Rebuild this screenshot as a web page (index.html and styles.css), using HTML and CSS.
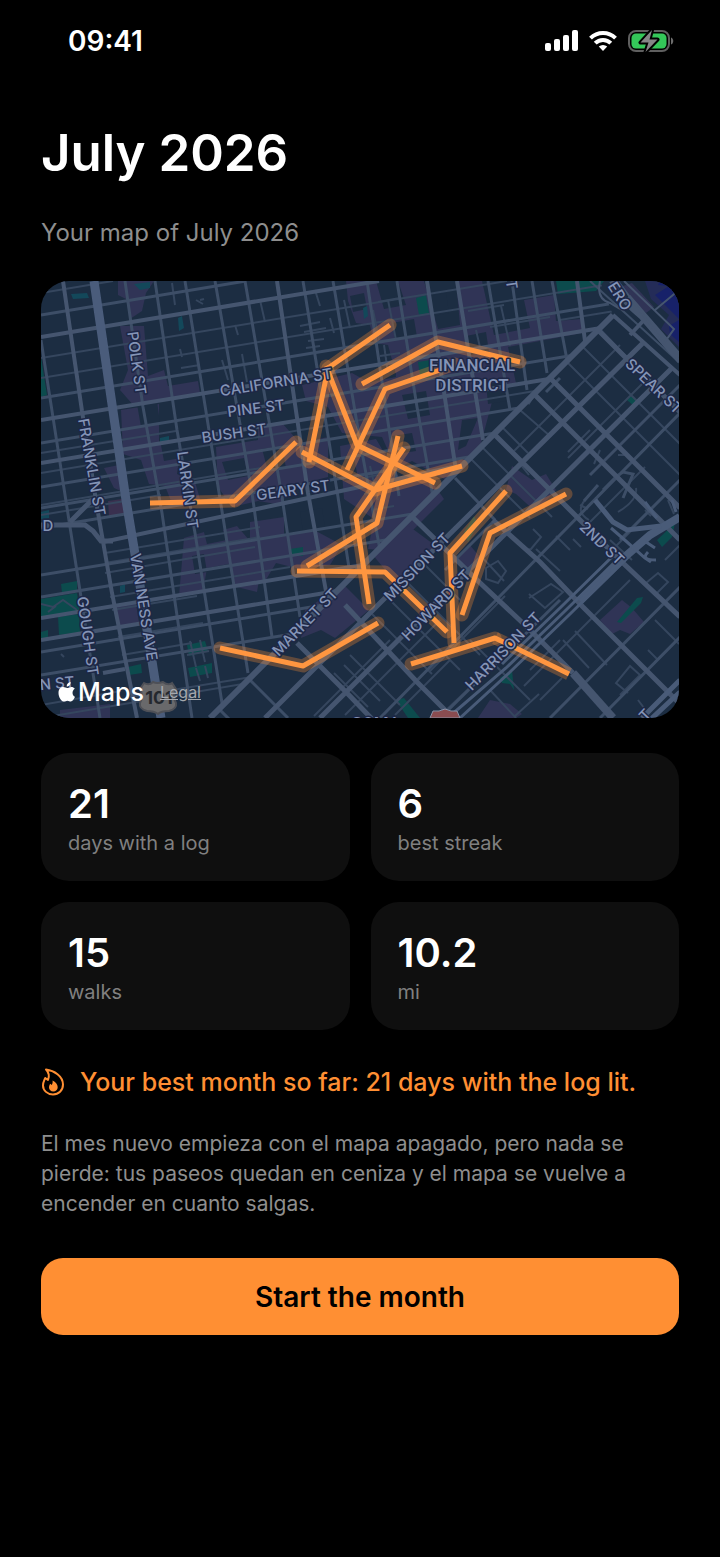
FILE: index.html
```html
<!DOCTYPE html>
<html lang="en">
<head>
    <meta charset="UTF-8">
    <meta name="viewport" content="width=device-width, initial-scale=1.0">
    <title>July 2026</title>
    <link rel="stylesheet" href="styles.css">
</head>
<body>
    <header class="status-bar">
        <span class="time">09:41</span>
        <div class="status-icons">
            <svg width="33" height="22" viewBox="0 0 33 22" fill="#fff" aria-hidden="true">
                <rect x="0" y="13" width="6" height="8" rx="2"/>
                <rect x="9" y="9" width="6" height="12" rx="2"/>
                <rect x="18" y="5" width="6" height="16" rx="2"/>
                <rect x="27" y="0" width="6" height="21" rx="2"/>
            </svg>
            <svg width="28" height="22" viewBox="0 0 28 22" fill="none" stroke="#fff" stroke-width="4" aria-hidden="true">
                <path d="M1.5 8.2a17.800 17.800 0 0 1 25 0"/>
                <path d="M6.200 13.200a11 11 0 0 1 15.600 0"/>
                <path d="M14 21l-4.200-4.400a6 6 0 0 1 8.400 0z" fill="#fff" stroke="none"/>
            </svg>
            <svg width="46" height="24" viewBox="0 0 46 24" aria-hidden="true">
                <rect x="1" y="2" width="40" height="20" rx="7" fill="none" stroke="#5f5f5f" stroke-width="2"/>
                <rect x="3.500" y="4.500" width="35" height="15" rx="4.500" fill="#34c759"/>
                <path d="M43 8.500c3 1 3 6 0 7z" fill="#6d6d6d"/>
                <path d="M24 1L12.500 13.500h8L17.500 23 29.500 10.500h-8z" fill="#858587" stroke="#000" stroke-width="4" stroke-linejoin="round" paint-order="stroke"/>
            </svg>
        </div>
    </header>

    <main class="recap">
        <h1 class="title">July 2026</h1>
        <p class="subtitle">Your map of July 2026</p>

        <div class="map">
            <svg class="map-canvas" viewBox="41 281 638 437" role="img" aria-label="Map of walks">
                <defs>
                    <clipPath id="north"><path d="M41 281H600L613 315 210 718H41z"/></clipPath>
                    <clipPath id="soma"><path d="M613 315L680 373V718H210z"/></clipPath>
                </defs>
                <rect x="41" y="281" width="638" height="437" fill="#1c2d42"/>

                <!-- shopping areas -->
                <g fill="#303456">
                    <path d="M118 281h36l-8 12-4 18-12 8-4-20-8-4zM120 326h24l4 50 16-6 4 16 30-5 2 12-66 13-14-16 8-20z"/>
                    <path d="M121 410l38-6v38l22 4-4 28 18 8 6 20-28 4-8-20-16-2-8-24-18-6zM104 468l20-4 4 30-14-6z"/>
                    <path d="M216 447l42-7v-12l24-5 18 20 28-6v40l-40 10-6 18-24-4-26 6-14-20z"/>
                    <path d="M184 538l20-6 3 12 20-4-4-10 14-4 26 30-6 36-24-6-4-22-22 4-4 24-24 4z"/>
                    <path d="M250 522l34-5v18l32-4 26 14-12 20-30 4-24-6-12 20-14-4z"/>
                    <path d="M346 281h30l8 28 22-4-8-24h26l14 48 22-4-4-44h26l12 54 36-7-6-28 30-5 2 26 26-2v14l-74 14 8 36-20 4-16 60-32 34-36-20-16 8-14-32-40-4-14-26-22-6-4-16 50-12 18 10 26-8-8-30-14-2-4-18-14-2-8-22z"/>
                    <path d="M340 446l36-7 24 40 30 0 14 20-52 52-24-2 6-30-30-20z"/>
                    <path d="M372 554l34-30 30 22-24 30-20 2z"/>
                    <path d="M305 610l38-26 26 26-34 28-14-8-20 8z"/>
                    <path d="M512 466l20 14 14-6 10 16-20 22-20-18-10-4z"/>
                    <path d="M455 560l14-16 10 12-12 18zM600 620l22-20 10 8 12 14-14 12-10-4-8 4zM490 700l20 4 12 10-6 4h-38z"/>
                    <path d="M117 607l19-3 3 18-20 4zM60 710l50-6v14H60zM632 283l22 24-8 6-26-26z"/>
                </g>
                <path d="M108 501l14-2 3 15-16 3z" fill="#39304f"/>

                <!-- keeps the blocks from reading as one solid patch -->
                <g fill="#1c2d42">
                    <path d="M137 404l20-3 3 22-19 4zM160 440l16-2 5 20-17 3zM222 462l22-4 4 18-20 4zM262 449l20-3 4 22-18 3zM300 512l22-4 3 20-22 3zM392 323l22-4 3 18-22 3zM402 395l24-4 4 24-22 4zM392 436l20-3 4 18-20 3zM462 420l16-2-12 28-8 4zM466 336l20-4 3 20-18 3zM486 384l16-3 4 20-18 3z"/>
                    <path d="M372 362l20-3 4 18-20 4zM340 460l14-2 4 20-14 3zM430 296l16-3 3 20-15 3zM350 296l14-3 3 16-14 3zM192 556l12-2 3 18-12 2z"/>
                </g>

                <!-- parks and water -->
                <g fill="#0c4b4d">
                    <path d="M41 357l6 38-6 2zM41 599l36-6 3 20-39 5zM61 584l16-3v10l-15 2zM58 617l21-3 1 18-21 3zM41 632l7-2v8h-7zM128 667l13-3 1 9-13 2z"/>
                    <path d="M187 645l18-4 3 10-19 5zM188 668l24-5v10l-22 4zM556 281h48l-8 10-38 3zM627 400l4-4 8 7-4 4zM418 362l12-2v20l-10-4zM396 700l8-2 16 20h-12zM416 298l10-3 3 18-10 2z"/>
                    <path d="M657 540l18-17-3 14-10 10zM617 622l20-24 6-1-2 6-20 20zM500 678l12-8 2 20-4-6-8-1zM464 532l10-16 4 8-10 18zM290 549l13-2v9l-12-1z"/>
                    <path d="M71 294l16-1 2 5-16 1zM178 318l4-2 2 12-5 3zM160 438l9-2v7l-9-1zM363 308l4-2 1 10-4 3zM41 512l8-2v8l-8 1zM120 586l5-2v8l-5 1zM134 284l16-2v6l-10 2z" fill="#13485a"/>
                </g>
                <path d="M645 281h34v66l-18-18 8-14-18-16z" fill="#242c58"/>
                <path d="M660 281h19v38l-24-24 14-9-11-1zM669 326l10-6v22l-9-8z" fill="#172169"/>

                <!-- grid north of Market -->
                <g clip-path="url(#north)" fill="none">
                    <g stroke="#35465e" stroke-width="2">
                        <path d="M41 293l72-12M41 358l466-77M41 378l587-97M41 453l135-22M41 473l500-83M41 505l220-37M41 515l120-20M105 553l155-26M105 563l155-26M105 573l150-26M110 597l180-30M112 610l85-14M118 637l85-14M122 655l70-12M41 705l80-14M130 697l128-21M41 718l220-37"/>
                        <path d="M172 283l3 22M196 300l7 4M204 299l-4 1M235 325l3 10M180 349l2 8M181 368l19-3M222 360l6 20M242 354l5 28M260 300l5 22M315 290l5 16M330 318l4 15M300 326l20-4M304 332l22-4M308 341l16-2M306 348l14-2M344 300l6 28M378 302l22-4M373 310l6 30M388 300l8 40M380 356l20-3M384 345l4 28M476 330l6 26M468 311l36-6M490 327l60-10M501 306l9 40M560 320l60-10M370 466l8 34M362 478l16-3M364 494l14-3M372 510l22-4M108 641l22-4"/>
                        <path d="M190 641l6 26M200 640l5 22M187 655l22-4M196 668l4 13M205 666l3 12M41 604l12 3 10-7 14 10M48 612l8-6M61 654l3 3"/>
                    </g>
                    <g stroke="#3d4e67" stroke-width="3">
                        <path d="M41 315l205-34M41 398l586-97M41 443l540-89M41 487l490-81M41 508l460-76M41 528l440-73M41 575l420-69M41 597l380-63M41 652l300-50M41 675l270-44"/>
                        <path d="M125 281l18 126 19 106 30 205M155 281l22 149 18 103 27 170M185 281l32 199 31 193M215 281l37 212 20 144M245 281l37 216 18 120M303 281l35 216 14 90M333 281l27 160 22 120M367 281l32 215M397 281l20 126 16 90M488 281l22 129M512 281l15 109M532 281l15 92M552 281l15 79M41 340l29 187 30 191"/>
                    </g>
                    <g stroke="#45556f" stroke-width="4">
                        <path d="M41 337l338-56M41 420l560-92M41 463l520-86M103 542l350-75M41 618l340-56M41 640l320-53M103 673l22-4"/>
                        <path d="M63 281l19 130M82 411l15 96 15 86 25 125M277 281l31 212 22 120M427 281l30 196M457 281l26 159M577 281l8 60"/>
                    </g>
                    <path d="M41 525h44l8 6 8 10 12 0M70 522l22-22" stroke="#45556f" stroke-width="5"/>
                    <path d="M94 281l32 219 10 60 25 158" stroke="#4a5c7b" stroke-width="9"/>
                </g>

                <!-- south of Market -->
                <g clip-path="url(#soma)" fill="none">
                    <g stroke="#35465e" stroke-width="2">
                        <path d="M583 347l97 97M567 362l113 113M482 447l70 70M470 458l60 60M620 345l-90 90M648 378l-80 80M557 428l-36 37 8 10M544 421l-30 30M520 410l30 26M500 425l28 28M590 430l-22 22M645 467l-60 60M533 529l8 8-10 12 -5 1M581 547l-8 -8M570 550l-14-14M560 571l-24-22M529 594l16 14 18-16-12-8-22 14 M480 555l24 26M505 596l-75 75M486 568l12-7 8 10-8 12-12-4z"/>
                        <path d="M420 560l40 40M405 580l75 75M390 600l70 70M372 614l60 60M350 655l50 50M334 673l34 34M344 665l36 36M390 640l-76 76M440 620l-95 95M450 660l-55 55M520 640l-80 76M470 640l60 60M490 690l26 28M540 700l22-22M515 716l24-22M600 610l-76 76M630 580l-40 40M575 631l32 34M563 640l26 28M560 640l-30 30M620 695l20-20-10-9-14 17 12 10M655 620l24 24M646 583l12-10 10 9-12 12M665 560l20-20M610 540l22 20M632 530l-18 18M648 650l10 10M638 700l6 8-5 6"/>
                        <path d="M580 505l8 4M585 500q-10 12 4 20M600 450l-6 14M618 455l8 0 12 12 M645 510l6 6M668 500l6 14M618 512q20-12 18-24"/>
                    </g>
                    <g stroke="#3d4e67" stroke-width="3">
                        <path d="M680 413l-300 305M680 480l-60 60M560 600l-120 118M680 587l-130 131M680 637l-80 81M495 520l-50 50M600 330l80 83M540 386l-12 18M250 680l38 38M210 700l20 20M455 478l40 42M680 385l-30 30 -60 60M598 485l-14 16M623 498l10-24 -10-2-6 4-14 14"/>
                        <path d="M680 318l-30 30M652 350l28-24M560 378l-14 14"/>
                    </g>
                    <g stroke="#45556f" stroke-width="5">
                        <path d="M598 330l82 82M550 378l85 85 45 45M532 392l31 31 44 44 73 73M493 433l30 30 40 40 60 60 57 54M493 520l47 42 43 45 40 40 50 50 10 10M400 505l77 75 50 47 46 46M345 605l72 77 36 36M297 643l50 50 26 27M653 333l-270 267-118 118M680 360l-360 358"/>
                        <path d="M573 673l40 45" stroke-width="8"/>
                    </g>
                    <!-- freeway -->
                    <g stroke="#495b78">
                        <path d="M680 517l-30 18-23 20-47 46" stroke-width="8"/>
                        <path d="M625 560l-56 55-59 57-50 46M621 556l-56 55-59 57-56 48M617 552l-56 55-59 57" stroke-width="3"/>
                        <path d="M595 500l18 22 14 8 34-4M680 692l-30 28M680 680l-38 38" stroke-width="5"/>
                        <path d="M611 528l16 14 18 16 6 4M645 502l12 16M672 500l4 12M648 552q-8 8 8 8M655 548l-9-6" stroke-width="3"/>
                    </g>
                </g>

                <path d="M613 315L210 718" stroke="#45556f" stroke-width="6"/>
                <g fill="none" stroke="#45556f">
                    <path d="M590 281l90 82" stroke="#3d4e67" stroke-width="2"/>
                    <path d="M613 315l67 60M630 335l14-15" stroke-width="4"/>
                    <path d="M612 281q10 20 30 36l38 44M628 297l52 60" stroke-width="6"/>
                    <path d="M624 281l50 48-10 14-46-62M600 281q-4 18 10 22l10 6M655 310l24-20" stroke-width="2"/>
                </g>

                <!-- walks: wide glow under a bright line -->
                <g class="walks glow">
                    <path class="cut" d="M150 503l85-2"/>
                    <path d="M235 501l61-59"/>
                    <path d="M220 648l83 18 75-43"/>
                    <path d="M390 325l-62 43-19 94"/>
                    <path d="M326 366l31 79 78 38"/>
                    <path d="M362 384l76-42 82 20"/>
                    <path d="M347 470l38-81 70-25"/>
                    <path d="M302 452l73 38 87-24"/>
                    <path d="M398 436l-21 87-70 43"/>
                    <path d="M404 448l-48 69 13 87"/>
                    <path d="M297 571l88 1 62 60"/>
                    <path d="M506 491l-56 62 4 90"/>
                    <path d="M566 494l-76 39-28 82"/>
                    <path d="M411 664l84-26"/>
                    <path class="cut" d="M495 638l74 36"/>
                </g>
                <g class="walks line">
                    <path d="M150 503l85-2 61-59"/>
                    <path d="M220 648l83 18 75-43"/>
                    <path d="M390 325l-62 43-19 94"/>
                    <path d="M326 366l31 79 78 38"/>
                    <path d="M362 384l76-42 82 20"/>
                    <path d="M347 470l38-81 58-20"/>
                    <path d="M302 452l73 38 87-24"/>
                    <path d="M398 436l-21 87-70 43"/>
                    <path d="M404 448l-48 69 13 87"/>
                    <path d="M297 571l88 1 62 60"/>
                    <path d="M506 491l-56 62 4 90"/>
                    <path d="M566 494l-76 39-28 82"/>
                    <path d="M411 664l84-26 74 36"/>
                </g>

                <g class="street">
                    <text transform="translate(137 363) rotate(82)">POLK ST</text>
                    <text transform="translate(92 467) rotate(80)">FRANKLIN ST</text>
                    <text transform="translate(276 382) rotate(-9)">CALIFORNIA ST</text>
                    <text transform="translate(256 408) rotate(-7)">PINE ST</text>
                    <text transform="translate(234 433) rotate(-8)">BUSH ST</text>
                    <text transform="translate(188 490) rotate(82)">LARKIN ST</text>
                    <text transform="translate(293 490) rotate(-8)">GEARY ST</text>
                    <text transform="translate(144 607) rotate(81)">VAN NESS AVE</text>
                    <text transform="translate(88 636) rotate(82)">GOUGH ST</text>
                    <text transform="translate(305 622) rotate(-46)">MARKET ST</text>
                    <text transform="translate(417 567) rotate(-46)">MISSION ST</text>
                    <text transform="translate(436 605) rotate(-46)">HOWARD ST</text>
                    <text transform="translate(503 651) rotate(-46)">HARRISON ST</text>
                    <text transform="translate(602 543) rotate(44)">2ND ST</text>
                    <text transform="translate(654 386) rotate(44)">SPEAR ST</text>
                    <text transform="translate(620 296) rotate(58)">ERO</text>
                    <text transform="translate(512 284) rotate(82)">T</text>
                    <text transform="translate(48 525)">D</text>
                    <text transform="translate(57 683) rotate(-6)">N ST</text>
                    <text transform="translate(645 715) rotate(-46)">T</text>
                </g>
                <g class="district">
                    <text x="472" y="371">FINANCIAL</text>
                    <text x="472" y="391">DISTRICT</text>
                    <text x="376" y="729">SOMA</text>
                </g>

                <path d="M144 683q5 3 9-1 4 2 10 0 5 4 9 1l4 6q-4 7 0 14 1 6-7 8-8 0-11 3-4-3-11-3-8-2-7-8 4-7 0-14z" fill="#69696b" stroke="#4e5057" stroke-width="2"/>
                <text class="shield" x="159" y="704">101</text>
                <path d="M433 711q6 1 12-2 6 3 12 2l3 7h-30z" fill="#8a4c50" stroke="#8a93a8"/>
            </svg>
            <div class="map-credit">
                <svg width="18" height="22" viewBox="0 0 18 22" fill="#fff" aria-hidden="true">
                    <path d="M12.600 1c.2 2.500-1.700 4.500-3.900 4.500C8.500 3.200 10.400 1.200 12.600 1zM17 15.800c-1 2.600-2.500 4.700-4.200 4.700-1.300 0-1.900-.8-3.400-.8s-2.200.8-3.400.8C3.200 20.500.5 16 .5 11.900.5 8 2.800 6 5.300 6c1.600 0 2.800 1 3.900 1 1 0 2.500-1.100 4.200-1.100 1.300 0 2.600.6 3.400 1.800-3.200 2-2.800 6.600.2 8.100z"/>
                </svg>
                <span class="maps-name">Maps</span>
                <a class="legal" href="#">Legal</a>
            </div>
        </div>

        <dl class="stats">
            <div class="stat">
                <dt>days with a log</dt>
                <dd>21</dd>
            </div>
            <div class="stat">
                <dt>best streak</dt>
                <dd>6</dd>
            </div>
            <div class="stat">
                <dt>walks</dt>
                <dd>15</dd>
            </div>
            <div class="stat">
                <dt>mi</dt>
                <dd>10.2</dd>
            </div>
        </dl>

        <p class="best">
            <svg width="24" height="28" viewBox="0 0 24 28" aria-hidden="true">
                <path d="M5 1.500C13 2.500 22 8 22 16.500 22 22.500 17.500 26.500 12 26.500S2 22.500 2 17.500c0-3 1.200-5 2.200-7.500L7 12C8.500 8 7.500 4 5 1.500z" fill="none" stroke="#ff8f33" stroke-width="2" stroke-linejoin="round"/>
                <path d="M11.500 12.500c4 2 5.200 4.500 5.200 6.800 0 2.500-1.900 4.200-4.400 4.200S8 21.800 8 19.500c0-1.600.6-2.700 1.200-3.800l1.500 1.300c.9-1.300 1.200-2.900.8-4.500z" fill="#ff8f33"/>
            </svg>
            <span>Your best month so far: 21 days with the log lit.</span>
        </p>

        <p class="note" lang="es">El mes nuevo empieza con el mapa apagado, pero nada se pierde: tus paseos quedan en ceniza y el mapa se vuelve a encender en cuanto salgas.</p>

        <button class="start" type="button">Start the month</button>
    </main>
</body>
</html>
```

FILE: styles.css
```css
* {
    box-sizing: border-box;
}

body {
    margin: 0;
    background: #000;
    color: #fff;
    font-family: Inter, "Liberation Sans", sans-serif;
}

.status-bar {
    display: flex;
    justify-content: space-between;
    align-items: center;
    height: 82px;
    padding: 0 46px 0 68px;
}

.time {
    font-size: 28px;
    font-weight: 600;
}

.status-icons {
    display: flex;
    align-items: center;
    gap: 11px;
}

.recap {
    padding: 39px 41px;
}

.title {
    margin: 0;
    font-size: 51px;
    line-height: 64px;
    font-weight: 600;
}

.subtitle {
    margin: 32px 0;
    font-size: 24px;
    line-height: 32px;
    color: #8e8e8e;
}

.map {
    position: relative;
    border-radius: 28px;
    overflow: hidden;
}

.map-canvas {
    display: block;
    width: 100%;
    height: auto;
}

.walks {
    fill: none;
    stroke-linejoin: round;
    stroke-linecap: round;
}

.glow {
    stroke: #ff8f33;
    stroke-opacity: 0.3;
    stroke-width: 13px;
}

.cut {
    stroke-linecap: butt;
}

.line {
    stroke: #ff9640;
    stroke-width: 5px;
    stroke-linecap: butt;
}

.street text,
.district text {
    text-anchor: middle;
    dominant-baseline: central;
    fill: #8494b6;
    stroke: #1d2746;
    stroke-width: 3px;
    stroke-linejoin: round;
    paint-order: stroke;
    font-size: 15px;
    font-weight: 500;
}

.district text {
    font-family: Roboto, sans-serif;
    font-size: 17px;
    font-weight: 500;
    dominant-baseline: auto;
}

.shield {
    font-size: 18px;
    font-weight: 700;
    text-anchor: middle;
    fill: #25282e;
}

.map-credit {
    position: absolute;
    left: 17px;
    bottom: 10px;
    display: flex;
    align-items: center;
    gap: 2px;
    line-height: 32px;
}

.maps-name {
    font-size: 25px;
    font-weight: 500;
}

.legal {
    margin-left: 14px;
    font-size: 16px;
    color: #a5a8ae;
}

.stats {
    display: grid;
    grid-template-columns: 1fr 1fr;
    gap: 21px;
    margin: 35px 0 36px;
}

.stat {
    display: flex;
    flex-direction: column-reverse;
    justify-content: center;
    height: 128px;
    padding: 2px 27px 0;
    border-radius: 28px;
    background: #0f0f0f;
}

.stat dt {
    font-size: 20px;
    line-height: 28px;
    color: #808080;
}

.stat dd {
    margin: 0;
    font-size: 40px;
    line-height: 50px;
    font-weight: 600;
}

.best {
    display: flex;
    align-items: center;
    gap: 15px;
    margin: 0;
    font-size: 25px;
    line-height: 32px;
    font-weight: 500;
    color: #ff8f33;
}

.note {
    margin: 31px 0 39px;
    font-size: 21px;
    line-height: 30px;
    color: #8e8e8e;
}

.start {
    display: block;
    width: 100%;
    height: 77px;
    border: 0;
    border-radius: 22px;
    background: #ff8f33;
    color: #000;
    font: inherit;
    font-size: 28px;
    font-weight: 600;
}
```
